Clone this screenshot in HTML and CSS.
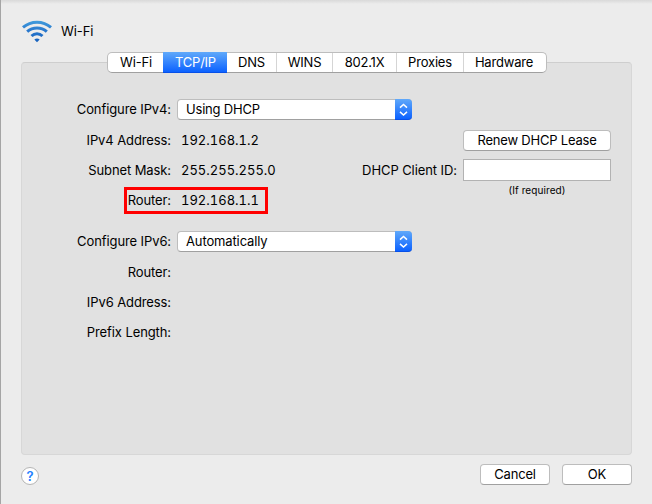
FILE: index.html
```html
<!DOCTYPE html>
<html lang="en">
<head>
<meta charset="utf-8">
<title>Wi-Fi</title>
<link rel="stylesheet" href="styles.css">
</head>
<body>
<main class="sheet">
  <header class="head">
    <svg class="wifi" width="32" height="24" viewBox="0 0 32 24" fill="none" stroke="url(#blue)" stroke-width="3">
      <defs><linearGradient id="blue" gradientUnits="userSpaceOnUse" x1="0" y1="0" x2="0" y2="23"><stop offset="0" stop-color="#46a3df"/><stop offset=".5" stop-color="#2878cd"/><stop offset="1" stop-color="#1560bd"/></linearGradient></defs>
      <path d="M2 8.400Q8 3.200 16 3.200T30 8.400"/>
      <path d="M6.200 12.700Q10.300 9 16 9T25.800 12.700"/>
      <path d="M10.500 17Q12.900 14.700 16 14.700T21.500 17"/>
      <path d="M13.300 20.500Q16 18.300 18.700 20.500L16 23.300Z" fill="url(#blue)" stroke="none"/>
    </svg>
    <span class="title">Wi-Fi</span>
  </header>
  <nav class="tabs">
    <span class="tab t-wifi">Wi-Fi</span><span class="tab t-tcp active">TCP/IP</span><span class="tab t-dns">DNS</span><span class="tab t-wins">WINS</span><span class="tab t-8021x">802.1X</span><span class="tab t-proxies">Proxies</span><span class="tab t-hardware">Hardware</span>
  </nav>
  <section class="panel">
    <div class="settings">
      <div class="row first"><span class="label">Configure IPv4:</span>
        <div class="select"><span class="choice">Using DHCP</span><span class="arrows"><svg width="17" height="19" viewBox="0 0 17 19" fill="none" stroke="#fff" stroke-width="1.5"><path d="M5 7.600 8.500 4.500 12 7.600M5 11.900 8.500 15 12 11.900"/></svg></span></div></div>
      <div class="row"><span class="label">IPv4 Address:</span><span class="value">192.168.1.2</span></div>
      <div class="row"><span class="label">Subnet Mask:</span><span class="value">255.255.255.0</span></div>
      <div class="row marked"><span class="label">Router:</span><span class="value">192.168.1.1</span></div>
      <div class="row second"><span class="label">Configure IPv6:</span>
        <div class="select"><span class="choice auto">Automatically</span><span class="arrows"><svg width="17" height="19" viewBox="0 0 17 19" fill="none" stroke="#fff" stroke-width="1.5"><path d="M5 7.600 8.500 4.500 12 7.600M5 11.900 8.500 15 12 11.900"/></svg></span></div></div>
      <div class="row after"><span class="label">Router:</span></div>
      <div class="row"><span class="label">IPv6 Address:</span></div>
      <div class="row"><span class="label">Prefix Length:</span></div>
    </div>
    <div class="lease">
      <button class="button renew">Renew DHCP Lease</button>
      <div class="client"><label for="client-id">DHCP Client ID:</label><input id="client-id" type="text"></div>
      <small>(If required)</small>
    </div>
  </section>
  <footer class="foot">
    <button class="help">?</button>
    <div class="actions"><button class="button">Cancel</button><button class="button ok">OK</button></div>
  </footer>
</main>
</body>
</html>
```
FILE: styles.css
```css
*, *::after { box-sizing: border-box; }
body {
  margin: 0;
  font: 13px/19px Inter, "Liberation Sans", sans-serif;
  letter-spacing: -0.2px;
  color: #000;
}
.sheet {
  height: 504px;
  overflow: hidden;
  background: linear-gradient(#d9d9d9, #ececec 4px);
  border-left: 1px solid #a5a5a5;
  padding: 19px 20px 0;
}
.head { display: flex; height: 33px; }
.title { margin: 3px 0 0 8px; letter-spacing: -0.1px; }
.tabs {
  position: relative;
  display: flex;
  width: 440px;
  height: 21px;
  margin-left: 86px;
  background: #fff;
  border: 1px solid #bdbdbd;
  border-bottom-color: #a0a0a0;
  border-radius: 5px;
}
.tab { text-align: center; border-right: 1px solid #d5d5d5; }
.tab:last-child { border: 0; }
.tab.active {
  height: 21px;
  margin-top: -1px;
  padding-top: 1px;
  color: #fff;
  letter-spacing: -0.25px;
  border: 0;
  background: linear-gradient(#60a9fa, #0c62ff);
  border-bottom: 1px solid #0750e8;
}
.t-wifi { width: 55px; border: 0; padding-left: 1px; }
.t-tcp { width: 64px; padding-left: 1px; }
.t-dns { width: 50px; }
.t-wins { width: 56px; }
.t-8021x { width: 64px; }
.t-proxies { width: 67px; }
.t-hardware { width: 82px; padding-right: 2px; }
.panel {
  display: flex;
  width: 611px;
  height: 393px;
  margin-top: -11px;
  padding-top: 32px;
  background: #e1e1e1;
  border: 1px solid #d7d7d7;
  border-top-color: #cecece;
  border-radius: 4px;
}
.settings { width: 390px; }
.row { display: flex; height: 30px; align-items: center; }
.row.first { margin-top: -1px; margin-bottom: 1px; }
.label { width: 149px; text-align: right; white-space: nowrap; letter-spacing: -0.1px; }
.value { margin-left: 10px; letter-spacing: 0; font-variant-numeric: tabular-nums; }
.second { margin-top: 11px; }
.after { margin-top: 1px; }
.select {
  display: flex;
  width: 235px;
  height: 21px;
  margin-left: 6px;
  background: #fff;
  border: 1px solid #bdbdbd;
  border-bottom-color: #a0a0a0;
  border-radius: 4px;
}
.choice { flex: 1; padding-left: 8px; }
.auto { letter-spacing: -0.13px; }
.arrows {
  width: 17px;
  height: 21px;
  margin: -1px -1px;
  padding-top: 1px;
  border-radius: 0 4px 4px 0;
  background: linear-gradient(#60a9fa, #0c62ff);
  border-bottom: 1px solid #0750e8;
}
.arrows svg { display: block; }
.marked { position: relative; }
.marked::after {
  content: "";
  position: absolute;
  left: 102px;
  top: 2px;
  width: 144px;
  height: 27px;
  border: 3px solid #f00;
}
.lease {
  display: flex;
  flex-direction: column;
  align-items: flex-end;
  width: 199px;
  padding-top: 35px;
}
.button {
  width: 70px;
  height: 21px;
  padding: 0;
  font: inherit;
  letter-spacing: inherit;
  color: #000;
  background: #fff;
  border: 1px solid #bdbdbd;
  border-bottom-color: #a0a0a0;
  border-radius: 4px;
}
.renew { width: 148px; }
.client { display: flex; align-items: center; margin-top: 8px; white-space: nowrap; letter-spacing: -0.08px; }
.client input {
  width: 148px;
  height: 22px;
  margin-left: 6px;
  border: 1px solid #b2b2b2;
  background: #fff;
}
small { width: 148px; font-size: 10px; letter-spacing: 0.08px; text-align: center; }
.foot { display: flex; justify-content: space-between; width: 611px; padding-top: 9px; }
.help {
  width: 18px;
  height: 18px;
  margin-top: 3px;
  padding: 0;
  font: 600 13px/15px Inter, sans-serif;
  color: #2280ff;
  background: #fff;
  border: 1px solid #b5b5b5;
  border-radius: 50%;
}
.actions { display: flex; gap: 12px; }
```
